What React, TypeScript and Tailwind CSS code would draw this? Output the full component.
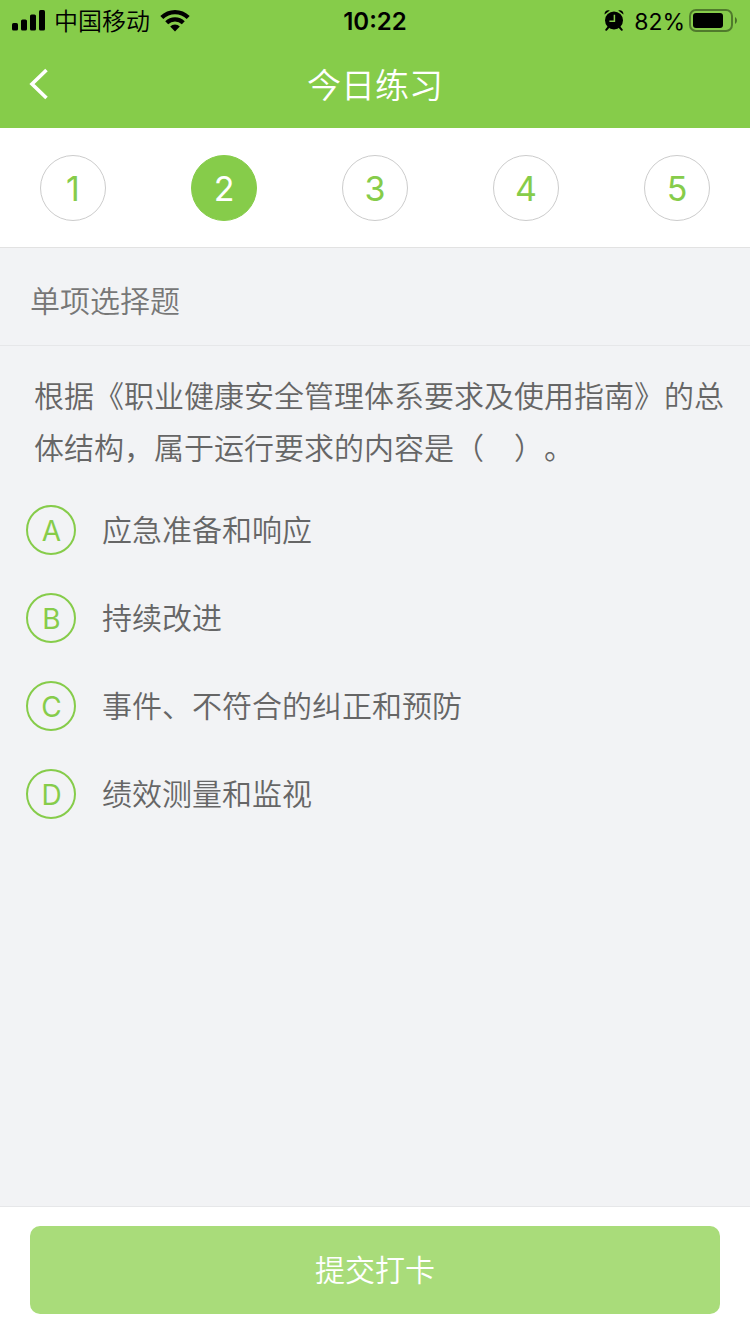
import React, { useState } from "react";

interface Option {
  key: string;
  text: string;
}

const QUESTION_COUNT = 5;

const OPTIONS: Option[] = [
  { key: "A", text: "应急准备和响应" },
  { key: "B", text: "持续改进" },
  { key: "C", text: "事件、不符合的纠正和预防" },
  { key: "D", text: "绩效测量和监视" },
];

function SignalIcon() {
  return (
    <svg width="34" height="22" viewBox="0 0 34 22" fill="currentColor" aria-hidden="true">
      <rect x="0" y="13" width="6" height="7.5" rx="1.6" />
      <rect x="9" y="9.5" width="6" height="11" rx="1.6" />
      <rect x="18" y="4.500" width="6" height="16" rx="1.6" />
      <rect x="27" y="0" width="6" height="20.5" rx="1.6" />
    </svg>
  );
}

function WifiIcon() {
  return (
    <svg width="30" height="22" viewBox="0 0 30 22" aria-hidden="true">
      <g fill="none" stroke="currentColor" strokeWidth="4.2">
        <path d="M1.8 7.6a18.8 18.8 0 0 1 26.4 0" />
        <path d="M6.7 12.8a11.8 11.8 0 0 1 16.6 0" />
      </g>
      <path d="M15 21.4l-4.8-4.8a6.8 6.8 0 0 1 9.6 0z" fill="currentColor" />
    </svg>
  );
}

function AlarmIcon() {
  return (
    <svg width="20" height="22" viewBox="0 0 20 22" aria-hidden="true">
      <circle cx="10" cy="10.4" r="9" fill="currentColor" />
      <path
        d="M4.6 17l-2.400 2.800M15.400 17l2.400 2.800"
        stroke="currentColor"
        strokeWidth="2"
        strokeLinecap="round"
      />
      <path
        d="M0.6 4.600C0.200 1.800 2.800 -0.600 5.800 0.600zM19.400 4.600C19.800 1.800 17.200 -0.600 14.200 0.600z"
        fill="currentColor"
      />
      <path d="M10.400 4.800v6.400H5.400" fill="none" stroke="#86cc4a" strokeWidth="1.500" />
    </svg>
  );
}

function BatteryIcon() {
  return (
    <svg width="49" height="24" viewBox="0 0 49 24" aria-hidden="true">
      <rect
        x="1"
        y="1"
        width="42"
        height="21"
        rx="6"
        fill="none"
        stroke="currentColor"
        strokeOpacity="0.4"
        strokeWidth="2"
      />
      <rect x="4" y="4" width="30" height="15" rx="3" fill="currentColor" />
      <path d="M46 8c2.6 1.4 2.6 5.6 0 7z" fill="currentColor" fillOpacity="0.45" />
    </svg>
  );
}

function StatusBar() {
  return (
    <div className="grid h-10 grid-cols-3 items-center px-[12px] text-2xl leading-10 text-black">
      <div className="flex items-center gap-2">
        <SignalIcon />
        <div className="flex items-center gap-[10px]">
          <span className="pt-[2px]">中国移动</span>
          <WifiIcon />
        </div>
      </div>
      <div className="pt-[2px] text-center font-semibold">10:22</div>
      <div className="flex items-center justify-end gap-1">
        <div className="flex items-center gap-[10px]">
          <AlarmIcon />
          <span className="pt-[2px] text-[23px] font-normal">82%</span>
        </div>
        <BatteryIcon />
      </div>
    </div>
  );
}

export default function App() {
  const [current, setCurrent] = useState(2);
  const [answer, setAnswer] = useState<string | null>(null);

  return (
    <div className="flex min-h-screen flex-col bg-[#f2f3f5] font-['Inter','Noto_Sans_CJK_SC',sans-serif] text-[30px] font-[350] text-[#666] [text-spacing-trim:space-all]">
      <header className="bg-[#86cc4a]">
        <StatusBar />
        <div className="grid h-[88px] grid-cols-[80px_1fr_80px] items-center text-white">
          <button type="button" aria-label="返回" className="flex h-full items-center pl-7">
            <svg width="22" height="32" viewBox="0 0 22 32" fill="none" aria-hidden="true">
              <path d="M18.5 2L4 16l14.5 14" stroke="currentColor" strokeWidth="3.6" />
            </svg>
          </button>
          <h1 className="pt-[2px] text-center text-[34px] font-[350]">今日练习</h1>
        </div>
      </header>

      <nav className="flex justify-between border-b border-[#e2e2e2] bg-white px-10 pt-[27px] pb-[26px]">
        {Array.from({ length: QUESTION_COUNT }, (_, i) => i + 1).map((n) => (
          <button
            key={n}
            type="button"
            onClick={() => setCurrent(n)}
            className={`flex size-[66px] items-center justify-center rounded-full border text-[34px] font-normal ${
              n === current
                ? "border-[#86cc4a] bg-[#86cc4a] text-white"
                : "border-[#ccc] bg-white text-[#86cc4a]"
            }`}
          >
            {n}
          </button>
        ))}
      </nav>

      <h2 className="border-b border-[#e6e7e9] px-[30px] pt-[29px] pb-5 leading-[48px] font-[350] text-[#777]">
        单项选择题
      </h2>

      <main className="flex-1 pt-6">
        <p className="pr-6 pl-[34px] leading-[52px]">
          根据《职业健康安全管理体系要求及使用指南》的总体结构，属于运行要求的内容是（　）。
        </p>
        <div role="radiogroup" className="flex flex-col gap-[38px] px-[26px] pt-[31px]">
          {OPTIONS.map((option) => (
            <label key={option.key} className="flex items-center gap-[26px]">
              <input
                type="radio"
                name="answer"
                value={option.key}
                checked={answer === option.key}
                onChange={() => setAnswer(option.key)}
                className="peer sr-only"
              />
              <span className="flex size-[50px] shrink-0 items-center justify-center rounded-full border-2 border-[#86cc4a] pt-px pl-px text-[28px] font-normal text-[#86cc4a] peer-checked:bg-[#86cc4a] peer-checked:text-white">
                {option.key}
              </span>
              <span className="leading-[50px]">{option.text}</span>
            </label>
          ))}
        </div>
      </main>

      <footer className="border-t border-[#e6e7e9] bg-white px-[30px] pt-[19px] pb-5">
        <button
          type="submit"
          className="h-[88px] w-full rounded-[10px] bg-[#a9dc7a] text-white"
        >
          提交打卡
        </button>
      </footer>
    </div>
  );
}
